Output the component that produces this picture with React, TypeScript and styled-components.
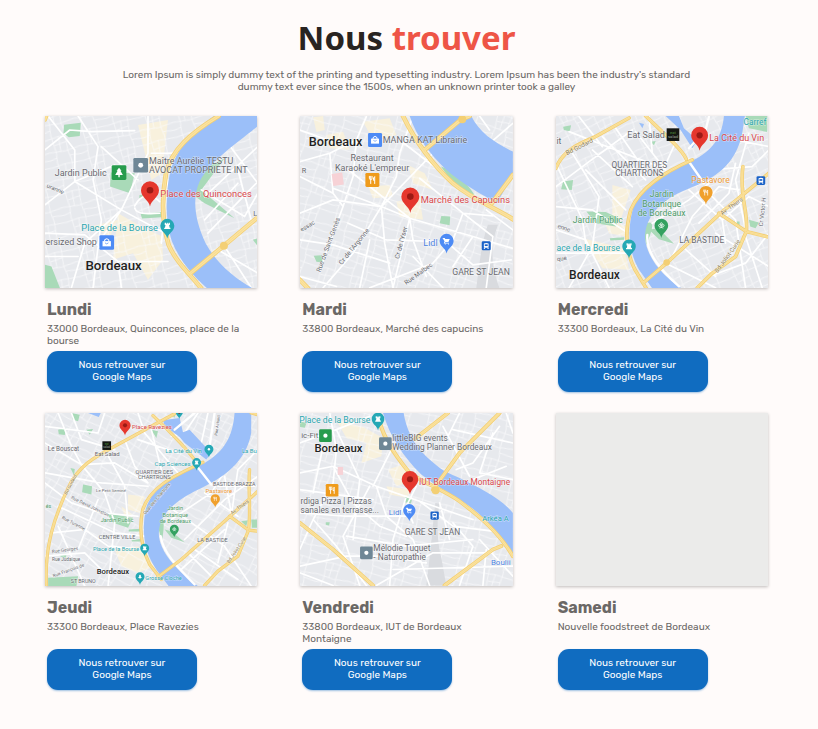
import React from 'react';
import styled, { createGlobalStyle } from 'styled-components';

const GlobalStyle = createGlobalStyle`
  *, *::before, *::after { box-sizing: border-box; }
  body {
    margin: 0;
    background: #fffbfa;
    color: #6b6866;
    font-family: Rubik, Roboto, 'Liberation Sans', sans-serif;
  }
`;

const Section = styled.section`
  padding: 16px 50px 40px 45px;
`;

const Header = styled.header`
  display: flex;
  flex-direction: column;
  align-items: center;
  gap: 9px;
  margin-bottom: 23px;
  text-align: center;
`;

const Title = styled.h2`
  margin: 0;
  color: #292421;
  font: 700 33px/44px 'Noto Sans', 'Open Sans', sans-serif;
`;

const Accent = styled.span`
  color: #ee5546;
`;

const Intro = styled.p`
  max-width: 590px;
  margin: 0;
  font-size: 10px;
  line-height: 12px;
`;

const Grid = styled.div`
  display: grid;
  grid-template-columns: repeat(3, minmax(0, 1fr));
  gap: 21px 43px;
`;

const Card = styled.article`
  display: flex;
  flex-direction: column;
`;

const MapFrame = styled.div`
  aspect-ratio: 213 / 173;
  overflow: hidden;
  background: #ebebea;
  box-shadow: 0 1px 3px rgba(0, 0, 0, 0.25);
`;

const MapSvg = styled.svg`
  display: block;
  width: 100%;
  height: 100%;
  font-family: Roboto, sans-serif;
`;

const Details = styled.div`
  display: flex;
  flex: 1;
  flex-direction: column;
  align-items: flex-start;
  padding: 12px 0 0 2px;
`;

const Day = styled.h3`
  margin: 0;
  font-size: 16px;
  font-weight: 700;
  line-height: 20px;
`;

const Address = styled.p`
  min-height: 24px;
  margin: 3px 0 4px;
  font-size: 10px;
  line-height: 12px;
`;

const MapsButton = styled.button`
  width: 150px;
  padding: 8px 24px 9px;
  border: 0;
  border-radius: 11px;
  background: #106cc0;
  box-shadow: 0 1px 2px rgba(16, 108, 192, 0.4);
  color: #fff;
  font: inherit;
  font-size: 10px;
  line-height: 12px;
  cursor: pointer;
`;

const C = {
  red: '#d8474b',
  teal: '#2aa5ae',
  green: '#4f9b69',
  blue: '#4d83e0',
  grey: '#68696f',
  orange: '#ee9a35',
  black: '#1f1f22',
};

type GlyphName = 'dot' | 'tower' | 'cart' | 'fork' | 'bag' | 'tree' | 'flower' | 'train';

function Glyph({ name, color = '#fff' }: { name: GlyphName; color?: string }) {
  switch (name) {
    case 'dot':
      return <circle r="7" fill={color} />;
    case 'tower':
      return <path fill={color} d="M-10-12h5v4h3v-4h4v4h3v-4h5v9h-3l2 10h3v5h-24v-5h3l2-10h-3z" />;
    case 'cart':
      return (
        <g fill={color}>
          <path d="M-13-11h6l2 4h17l-5 11h-12l-1 3h15v3h-20l3-8-6-10h-3z" />
          <circle cx="-5" cy="12" r="2" />
          <circle cx="7" cy="12" r="2" />
        </g>
      );
    case 'fork':
      return (
        <g stroke={color} strokeWidth="3" fill="none">
          <path d="M-9-12v7q0 4 4 4t4-4v-7M-5-12V12M7 12V-10q-5 3-4 11h4" />
        </g>
      );
    case 'bag':
      return (
        <g>
          <path fill={color} d="M-12-4h24v15h-24z" />
          <path fill="none" stroke={color} strokeWidth="3" d="M-6-3v-4q6-8 12 0v4" />
          <path fill="none" stroke="#4d8bf5" strokeWidth="2" d="M-5 1q5 6 10 0" />
        </g>
      );
    case 'tree':
      return <path fill={color} d="M0-14l7 9h-3l7 12h-9v6h-4v-6h-9l7-12h-3z" />;
    case 'flower':
      return (
        <g fill="none" stroke={color} strokeWidth="3">
          <circle cx="0" cy="-7" r="4" />
          <circle cx="-7" cy="0" r="4" />
          <circle cx="7" cy="0" r="4" />
          <path d="M0-3v13M-8 10q8-5 16 0" />
        </g>
      );
    case 'train':
      return (
        <g>
          <path fill={color} d="M-11-11q11-5 22 0v20h-22zM-9 10h5l-4 5h-5zM9 10h-5l4 5h5z" />
          <path fill="#1a62c8" d="M-7-7h14v8h-14z" />
        </g>
      );
  }
}

interface PinProps {
  x: number;
  y: number;
  color: string;
  size?: number;
  glyph?: GlyphName;
}

function Pin({ x, y, color, size = 1, glyph }: PinProps) {
  return (
    <g transform={`translate(${x} ${y})`}>
      <path
        transform={`scale(${size})`}
        fill={color}
        d="M0 49C-3 29-27 22-27 0A27 27 0 0 1 27 0C27 22 3 29 0 49Z"
      />
      {glyph ? <g transform={`scale(${size})`}><Glyph name={glyph} /></g> : <circle r={10 * size} fill="#9c1a14" />}
    </g>
  );
}

const RedPin = (p: { x: number; y: number; size?: number }) => <Pin {...p} color="#e5372d" />;

function Square({ x, y, color, glyph, w = 42 }: { x: number; y: number; color: string; glyph: GlyphName; w?: number }) {
  return (
    <g transform={`translate(${x} ${y})`}>
      <rect x={-w / 2} y={-w / 2} width={w} height={w} rx="4" fill={color} />
      <g transform={`scale(${w / 42})`}><Glyph name={glyph} /></g>
    </g>
  );
}

function EatSalad({ x, y, w = 38 }: { x: number; y: number; w?: number }) {
  return (
    <g transform={`translate(${x} ${y})`}>
      <rect x={-w / 2} y={-w / 2} width={w} height={w} fill="#141713" />
      <g fontSize={w / 3} textAnchor="middle">
        <text fill="#4c8b3a" y="-2">eat</text>
        <text fill="#9aa39a" y={w / 3 - 2}>salad</text>
      </g>
    </g>
  );
}

interface LabelProps {
  x: number;
  y: number;
  children: string;
  color?: string;
  size?: number;
  weight?: number;
  anchor?: 'start' | 'middle' | 'end';
  angle?: number;
}

function Label({ x, y, children, color = C.grey, size = 27, weight = 400, anchor = 'start', angle = 0 }: LabelProps) {
  return (
    <text
      transform={`translate(${x} ${y}) rotate(${angle})`}
      fill={color}
      fontSize={size}
      fontWeight={weight}
      textAnchor={anchor}
      stroke="#fff"
      strokeOpacity="0.5"
      strokeWidth="3"
      paintOrder="stroke"
    >
      {children}
    </text>
  );
}

interface BaseProps {
  id: string;
  label: string;
  top: number;
  mesh: number;
  river: string;
  parks?: string;
  sand?: string;
  streets: string;
  rails?: string;
  highways: string;
  bridges?: string;
  lanes?: number;
  children: React.ReactNode;
}

function CityMap({ id, label, top, mesh, river, parks, sand, streets, rails, highways, bridges, lanes = 10, children }: BaseProps) {
  return (
    <MapSvg viewBox={`20 ${top} 639 518`} preserveAspectRatio="xMidYMid slice" role="img" aria-label={label}>
      <defs>
        <pattern id={id} width="96" height="84" patternUnits="userSpaceOnUse" patternTransform={`rotate(${mesh})`}>
          <path
            d="M0 12L40 8L96 12M0 50L52 55L96 50M18 0L22 54L18 84M62 0L57 55L62 84M40 8L36 54M22 32L60 28M60 70L96 74M0 74L20 70"
            fill="none"
            stroke="#fbfbfc"
            strokeWidth="2"
          />
        </pattern>
      </defs>
      <rect x="20" y={top} width="640" height="520" fill="#e7e9ed" />
      {sand && <path d={sand} fill="#f8f1dd" />}
      <rect x="20" y={top} width="640" height="520" fill={`url(#${id})`} />
      {parks && <path d={parks} fill="#a9dab8" />}
      {rails && <path d={rails} fill="#d9dbdf" />}
      <g fill="none" strokeLinecap="round" strokeLinejoin="round">
        <path d={streets} stroke="#fff" strokeWidth="5" />
      </g>
      <path d={river} fill="#9bbff9" />
      <g fill="none" strokeLinecap="round" strokeLinejoin="round">
        {bridges && <path d={bridges} stroke="#fff" strokeWidth="7" />}
        <path d={highways} stroke="#f3cf74" strokeWidth={lanes + 1} />
        <path d={highways} stroke="#fbe3a0" strokeWidth={lanes - 4} />
        <path d={highways} stroke="#f3cf74" strokeWidth="1" />
      </g>
      {children}
    </MapSvg>
  );
}

const LundiMap = () => (
  <CityMap
    id="mesh-lundi"
    label="Plan de la place des Quinconces"
    top={18}
    mesh={-14}
    river="M528 18C470 58 412 120 396 190C380 260 384 340 402 395C424 450 462 495 508 536L645 536C590 505 535 460 503 400C470 330 462 265 485 215C515 155 590 105 660 48V18Z"
    parks="M78 44L128 38L125 78L92 82L76 70ZM218 188L290 190L276 250L216 230ZM20 465L40 470L66 536H20ZM470 215L520 165L560 145L520 200L490 240L590 325L500 280L470 258L472 325L462 290ZM304 256L330 250L330 263L304 266ZM308 312L370 306L370 322L312 326ZM645 390L660 385V410Z"
    sand="M300 45L390 30L372 190L340 210ZM240 310L300 345L372 380L375 450L330 510L285 430L225 450ZM160 350L240 330L215 380Z"
    streets="M20 120L95 60L160 65L290 62M120 18L180 110L165 210L190 330L165 534M20 285L110 215L230 165M30 18L110 120L110 215L250 300L390 375M100 534L140 400L250 300L330 130L330 20M20 370L140 375L240 455L390 455M190 110L300 210M340 130L420 130M250 300L180 400M20 440L120 440M290 288C310 250 340 250 365 275M290 295C300 318 340 310 365 310M240 455L250 534M500 260L660 110M490 240L620 320L660 250M540 60L660 220M510 370L660 215M600 180L640 330M540 420L660 490M560 410L640 534M500 330L600 220M390 210L370 400"
    highways="M542 18C460 68 400 120 384 190C372 260 372 340 392 405C416 460 456 492 490 536M458 490L555 410L660 322M20 28L24 18"
    lanes={13}
  >
    <circle cx="558" cy="408" r="12" fill="#f3cf74" />
    <Label x={24} y={232} size={18} angle={22}>uranne</Label>
    <Label x={50} y={197}>Jardin Public</Label>
    <Square x={243} y={188} color="#279c4d" glyph="tree" w={44} />
    <Square x={308} y={166} color="#6f8796" glyph="dot" w={44} />
    <Label x={333} y={161}>Maître Aurélie TESTU</Label>
    <Label x={333} y={188}>AVOCAT PROPRIETE INT</Label>
    <Label x={367} y={261} color={C.red} size={28}>Place des Quinconces</Label>
    <RedPin x={336} y={241} />
    <Label x={360} y={362} color={C.teal} size={28} anchor="end">Place de la Bourse</Label>
    <Pin x={388} y={348} color="#25a8b5" size={0.78} glyph="tower" />
    <Label x={22} y={406} size={27}>ersized Shop</Label>
    <Square x={206} y={398} color="#4d8bf5" glyph="bag" w={44} />
    <Label x={646} y={318} size={22}>L</Label>
    <Label x={142} y={482} color={C.black} size={40} weight={500}>Bordeaux</Label>
  </CityMap>
);

const MardiMap = () => (
  <CityMap
    id="mesh-mardi"
    label="Plan du marché des Capucins"
    top={18}
    mesh={16}
    river="M350 18C370 80 410 130 455 175C510 225 570 255 612 280L660 195V125C610 100 560 70 535 18Z"
    parks="M444 170C480 180 520 215 545 255L520 245C485 225 465 200 444 170ZM445 318L472 320L470 346L440 340ZM62 438L84 436L92 458L70 456Z"
    sand="M60 22L90 18L95 60L70 66ZM210 35L290 25L310 75L240 90ZM345 165L395 190L420 240L360 220ZM225 230L290 225L300 260L240 265ZM310 275L380 265L390 330L320 320ZM100 75L150 65L170 120L110 115Z"
    rails="M585 345L615 345C590 410 595 470 620 536H550C560 460 565 400 585 345Z"
    streets="M20 155L110 130L190 90L220 20M20 310L120 270L265 290L350 325L540 380L658 415M110 130L120 250L150 290L80 480M265 290L180 430L90 534M265 290L275 400L300 534M120 235L265 290L310 200L320 130L360 18M350 325L360 390L400 500M350 325L300 534M230 534L420 460L480 390L510 310L600 318M165 340L280 390L430 395M20 390L120 405L290 460M20 500L130 530M190 90L180 200L150 290M265 290L420 130L500 35M380 205L510 310L600 380L580 534M160 175L350 325M460 395L540 465L655 450M540 380L480 470M230 390L200 534M320 90L450 190M20 200L120 250M590 100L660 40M560 60L660 150M560 18L590 60M360 440L450 534M20 60L160 110M580 300L660 360"
    highways="M330 18C365 90 420 165 480 220C540 270 610 295 660 328M395 120L505 28L530 18M597 280L660 195M20 510L45 536"
    lanes={13}
  >
    <rect x="118" y="190" width="32" height="36" fill="#f7d2d6" transform="rotate(-8 134 208)" />
    <circle cx="508" cy="28" r="12" fill="#f3cf74" />
    <Label x={26} y={190} size={22}>R</Label>
    <Label x={47} y={107} color={C.black} size={38} weight={500}>Bordeaux</Label>
    <Label x={269} y={98} size={27}>MANGA KAT Librairie</Label>
    <Square x={246} y={90} color="#4d8bf5" glyph="bag" />
    <Label x={237} y={152} anchor="middle">Restaurant</Label>
    <Label x={237} y={182} anchor="middle">Karaoké L'empreur</Label>
    <Square x={238} y={210} color="#ef9b1b" glyph="fork" />
    <Label x={383} y={280} color={C.red} size={28}>Marché des Capucins</Label>
    <RedPin x={352} y={260} />
    <Label x={391} y={408} color={C.blue}>Lidl</Label>
    <Pin x={461} y={393} color="#4d8bf5" size={0.78} glyph="cart" />
    <Square x={580} y={408} color="#1a62c8" glyph="train" w={27} />
    <Label x={478} y={497} size={26}>GARE ST JEAN</Label>
    <Label x={26} y={366} size={18} angle={-32}>essac</Label>
    <Label x={82} y={488} size={20} angle={-70}>Rue de Saint-Genès</Label>
    <Label x={146} y={466} size={20} angle={-51}>Cr de l'Argonne</Label>
    <Label x={318} y={448} size={20} angle={-75}>Cr de l'Yser</Label>
    <Label x={340} y={526} size={19} angle={-36}>Rue Malbec</Label>
  </CityMap>
);

const MercrediMap = () => (
  <CityMap
    id="mesh-mercredi"
    label="Plan de la Cité du Vin"
    top={18}
    mesh={-24}
    river="M525 18C520 70 500 115 440 147C350 185 280 225 252 295C232 370 242 430 270 480L310 536H398C345 500 295 450 288 385C288 320 335 270 415 238C500 205 560 165 580 70L588 18ZM350 18L395 60L430 115L445 90L405 55L390 18Z"
    parks="M42 50L66 46L62 64L44 60ZM42 215L72 210L68 240L36 238ZM112 305L170 306L210 325L200 350L140 340ZM300 360L328 355L375 402L330 388ZM292 340C320 330 310 360 292 405L285 375ZM590 18H655V66L600 55ZM600 330L630 338L620 355L604 350ZM305 95L320 93L315 106ZM182 385L225 382L225 390L184 392ZM555 335H572V348L556 345Z"
    sand="M190 225L245 240L215 330L190 320ZM100 385L225 415L240 480L160 475ZM160 320L230 350L230 380L180 370Z"
    streets="M20 230L120 155L250 60M70 130L150 260L130 410M20 360L110 390L180 534M20 290L130 300L230 365M130 410L60 534M160 80L290 210M200 55L300 200M110 180L230 300M20 430L240 430M260 65L350 180M60 65L200 120L330 170M90 20L160 110M20 160L100 330L110 400M300 20L310 130M385 85L340 185M130 120L250 230M480 250L560 330L590 534M420 240L520 330L530 400M310 340L420 270L480 220L490 170M370 440L430 320L510 230M450 340L540 250L560 160M520 330L600 260L660 290M510 230L570 240M350 460L500 534M500 370L660 470M400 410L500 500M590 380L640 534M660 120L610 170L480 180M600 70L560 210L590 360M660 370L590 460L480 500M560 90L660 110"
    bridges="M415 148L465 220M295 375C290 430 335 480 390 530M420 115L470 60L480 20"
    highways="M20 175C40 125 80 105 135 82L240 24M290 18C350 75 400 120 412 148M430 150C350 185 275 230 245 300C225 370 232 430 258 480L292 536M282 520L355 458L520 305L660 190M582 170C570 260 600 310 592 365L510 310M592 365L560 440L490 490L445 534M592 365L660 382"
  >
    <path d="M270 38L285 42L280 55Z" fill="#9bbff9" />
    <circle cx="353" cy="458" r="10" fill="#f3cf74" />
    <Label x={22} y={102} size={26}>it</Label>
    <Label x={54} y={136} size={19} angle={-27} color="#8b7c58">Bd Godard</Label>
    <Label x={235} y={83}>Eat Salad</Label>
    <EatSalad x={372} y={74} />
    <Label x={481} y={94} color={C.red}>La Cité du Vin</Label>
    <RedPin x={452} y={76} size={0.94} />
    <Label x={584} y={45} color={C.teal} size={25}>Carref</Label>
    <Label x={271} y={175} anchor="middle" size={25}>QUARTIER DES</Label>
    <Label x={271} y={198} anchor="middle" size={25}>CHARTRONS</Label>
    <Label x={427} y={218} color={C.orange} size={26}>Pastavore</Label>
    <Pin x={471} y={248} color="#f0a02c" size={0.74} glyph="fork" />
    <Square x={636} y={212} color="#1a62c8" glyph="train" w={26} />
    <Label x={338} y={261} anchor="middle" color={C.green} size={26}>Jardin</Label>
    <Label x={338} y={290} anchor="middle" color={C.green} size={26}>Botanique</Label>
    <Label x={338} y={318} anchor="middle" color={C.green} size={26}>de Bordeaux</Label>
    <Pin x={337} y={347} color="#34a160" size={0.76} glyph="flower" />
    <Label x={71} y={339} color={C.green} size={26}>Jardin Public</Label>
    <Label x={22} y={424} color={C.teal} size={26}>ace de la Bourse</Label>
    <Pin x={240} y={409} color="#25a8b5" size={0.75} glyph="tower" />
    <Label x={391} y={400} size={25}>LA BASTIDE</Label>
    <Label x={520} y={317} size={18} angle={-36} color="#8b7c58">Av. Thiers</Label>
    <Label x={506} y={490} size={18} angle={-54} color="#8b7c58">Bd Joliot-Curie</Label>
    <Label x={642} y={350} size={18} angle={-84}>Cr Victor H</Label>
    <Label x={24} y={354} size={18} angle={18}>enne</Label>
    <Label x={24} y={454} size={18} angle={-8}>que</Label>
    <Label x={60} y={508} color={C.black} size={36} weight={500}>Bordeaux</Label>
  </CityMap>
);

const JeudiMap = () => (
  <CityMap
    id="mesh-jeudi"
    label="Plan de la place Ravezies"
    top={20}
    mesh={28}
    river="M590 20C585 90 560 135 500 170C420 205 345 235 323 310C310 380 320 440 355 490L392 540H480C430 500 370 450 363 390C358 330 405 290 470 255C560 215 625 165 640 80V20ZM375 42L425 35L435 78L455 70L520 140L505 160L440 110L425 92L380 58ZM150 20L188 20L182 32Z"
    parks="M60 70L85 65L80 86L62 84ZM100 20L125 25L120 45L104 40ZM145 70L165 68L155 85ZM135 235L162 240L160 265L132 258ZM205 320L285 335L270 365L225 350ZM30 515L120 510L115 540H30ZM380 370L400 375L440 408L400 395ZM97 185L110 188L108 208ZM340 70L360 75L355 95ZM365 330C385 340 375 380 372 405L362 370ZM610 345L630 342L625 360ZM640 340H660V365H642ZM272 370L310 368V376H272ZM280 402L312 398V406H282ZM62 448L85 446L82 458ZM400 25L412 22L410 34Z"
    sand="M270 265L320 270L305 320L270 310ZM230 430L300 420L350 480L300 500L250 480ZM250 300L290 330L260 330Z"
    streets="M20 110L130 175L230 170L330 230M60 20L100 120L130 175M20 230L100 290L190 320L300 330M130 175L200 260L230 350L210 540M60 300L230 380L320 390M40 380L140 370L210 420L320 430M20 200L190 230L330 240M20 450L140 440L200 500M260 100L290 180L330 230M200 130L260 240L270 350M340 70L370 190M300 20L320 80L420 200M100 20L130 100L230 130M200 20L180 80L20 60M60 360L140 540M180 280L120 430M300 100L420 140M480 20L440 80L400 90M510 20L490 110M390 300L560 420L640 540M440 400L560 280L660 210M400 340L520 260L570 180M560 210L580 320M430 490L560 370M470 430L600 520M500 260L600 330M650 240L540 240M570 350L540 470M660 130L600 190L580 330M450 440L520 510"
    bridges="M477 180L520 235M368 390C375 440 420 485 470 535M410 70L470 20M530 20L515 120"
    highways="M25 538C18 420 50 330 90 245C120 180 165 155 230 120L340 60L410 22M345 28C400 80 450 130 478 172M495 168C420 205 340 235 314 310C300 380 312 430 335 475L370 520M360 512L430 460L560 345L660 255M635 190C630 250 640 310 632 372L575 330M632 372L600 450L540 495L500 538M632 372L660 375M640 20L660 25"
    lanes={9}
  >
    <Label x={282} y={68} color={C.red} size={18}>Place Ravezies</Label>
    <RedPin x={261} y={57} size={0.62} />
    <Pin x={424} y={18} color="#25a8b5" size={0.4} />
    <Label x={29} y={134} size={19}>Le Bouscat</Label>
    <EatSalad x={206} y={118} w={26} />
    <Label x={170} y={149} size={18}>Eat Salad</Label>
    <Label x={492} y={139} color={C.teal} size={18} anchor="end">La Cité du Vin</Label>
    <Pin x={513} y={129} color="#25a8b5" size={0.5} glyph="dot" />
    <Label x={458} y={178} color={C.teal} size={18} anchor="end">Cap Sciences</Label>
    <Pin x={476} y={169} color="#25a8b5" size={0.5} glyph="tower" />
    <Label x={612} y={141} color={C.teal} size={18}>La Bu</Label>
    <Label x={349} y={203} anchor="middle" size={17}>QUARTIER DES</Label>
    <Label x={349} y={217} anchor="middle" size={17}>CHARTRONS</Label>
    <Label x={525} y={239} size={16}>BASTIDE-BRAZZA</Label>
    <Label x={503} y={259} color={C.orange} size={18}>Pastavore</Label>
    <Pin x={532} y={278} color="#f0a02c" size={0.52} glyph="fork" />
    <Label x={412} y={312} anchor="middle" color={C.green} size={17}>Jardin</Label>
    <Label x={412} y={331} anchor="middle" color={C.green} size={17}>Botanique</Label>
    <Label x={412} y={349} anchor="middle" color={C.green} size={17}>de Bordeaux</Label>
    <Pin x={409} y={369} color="#34a160" size={0.5} glyph="flower" />
    <Label x={188} y={347} color={C.green} size={17}>Jardin Public</Label>
    <Label x={182} y={399} size={17}>CENTRE VILLE</Label>
    <Label x={478} y={406} size={17}>LA BASTIDE</Label>
    <Label x={304} y={435} color={C.teal} size={17} anchor="end">Place de la Bourse</Label>
    <Pin x={320} y={426} color="#25a8b5" size={0.5} glyph="tower" />
    <Label x={176} y={503} color={C.black} size={23} weight={500}>Bordeaux</Label>
    <Label x={322} y={522} color={C.teal} size={17}>Grosse Cloche</Label>
    <Pin x={306} y={512} color="#25a8b5" size={0.5} glyph="tree" />
    <Label x={98} y={532} size={16}>ST BRUNO</Label>
    <Label x={174} y={258} size={13}>Le Petit Seminé</Label>
    <Label x={98} y={277} size={14} angle={26}>Rue David Johnston</Label>
    <Label x={70} y={337} size={14} angle={28}>Rue Turenne</Label>
    <Label x={42} y={441} size={14} angle={-7}>Rue Georges</Label>
    <Label x={42} y={464} size={14}>Rue Judaïque</Label>
    <Label x={46} y={514} size={14} angle={-20}>Rue François de</Label>
    <Label x={86} y={266} size={14} angle={-62} color="#8b7c58">Bd Godard</Label>
    <Label x={322} y={326} size={14} angle={-50} color="#8b7c58">Quai des Chartrons</Label>
    <Label x={582} y={326} size={15} angle={-36} color="#8b7c58">Av. Thiers</Label>
    <Label x={574} y={472} size={14} angle={-56} color="#8b7c58">Bd Joliot-Curie</Label>
    <Label x={538} y={88} size={12} angle={-82}>Rue Achard</Label>
    <Label x={23} y={304} color={C.green} size={16}>és</Label>
  </CityMap>
);

const VendrediMap = () => (
  <CityMap
    id="mesh-vendredi"
    label="Plan de l'IUT Bordeaux Montaigne"
    top={20}
    mesh={14}
    river="M270 20C290 90 330 150 385 205C440 250 520 285 560 325C600 360 640 410 660 455V320C615 265 520 225 455 195C390 150 345 100 332 20Z"
    parks="M338 272L358 276L354 292L336 288ZM98 348L110 348L108 358L98 356ZM20 45L40 50L35 64L20 62ZM465 205L520 235L500 230Z"
    sand="M130 42L210 62L270 95L265 150L205 170L220 110L160 95ZM285 190L330 175L370 220L310 240ZM280 240L350 250L345 275L290 265Z"
    rails="M427 290L440 292C432 340 430 400 446 460L460 538H400C408 480 416 390 427 290Z"
    streets="M20 110L130 70L230 30M20 200L120 180L250 240L380 285L540 340M110 20L130 130L120 230L60 340L20 430M120 180L180 290L260 360L340 390M230 240L150 390L200 538M250 240L280 330L360 400L410 538M20 320L160 330L340 330M130 70L200 220L180 400M60 340L130 420L220 538M340 270L300 400L290 538M20 250L240 280M160 390L340 420L540 400M300 120L240 240M20 480L160 450L280 450L400 470M250 538L420 440L600 440M480 350L540 420L500 538M380 285L480 360L640 380M560 400L660 510M20 500L120 538M440 290L470 400M370 240L340 300L360 350M90 120L60 260M620 60L540 170L490 190M450 60L530 210M500 20L460 100M660 110L480 70M660 220L560 200L600 80M640 20L660 80M540 220L640 180M580 430L570 538M300 490L660 480"
    highways="M256 20C260 80 300 140 350 200C400 235 450 250 500 285C560 330 620 380 660 450M365 98L465 20M420 250L500 140L620 20M20 350L120 430L240 538M455 538L600 430L625 420"
    lanes={11}
  >
    <rect x="134" y="182" width="16" height="24" fill="#f7d2d6" />
    <circle cx="428" cy="252" r="12" fill="#f3cf74" />
    <Label x={232} y={50} color={C.teal} size={26} anchor="end">Place de la Bourse</Label>
    <Pin x={255} y={38} color="#25a8b5" size={0.7} glyph="tower" />
    <Label x={24} y={95} size={24}>ic-Fit</Label>
    <Square x={97} y={88} color="#279c4d" glyph="dot" w={38} />
    <Label x={64} y={138} color={C.black} size={34} weight={500}>Bordeaux</Label>
    <Square x={277} y={112} color="#6f8796" glyph="dot" w={38} />
    <Label x={298} y={105} size={25}>littleBIG events</Label>
    <Label x={298} y={132} size={25}>Wedding Planner Bordeaux</Label>
    <Label x={378} y={236} color={C.red} size={25}>IUT Bordeaux Montaigne</Label>
    <RedPin x={351} y={219} size={0.92} />
    <Square x={117} y={252} color="#ef9b1b" glyph="fork" w={38} />
    <Label x={22} y={293} size={25}>rdiga Pizza | Pizzas</Label>
    <Label x={22} y={320} size={25}>sanales en terrasse...</Label>
    <Label x={287} y={326} color={C.blue} size={24}>Lidl</Label>
    <Pin x={349} y={312} color="#4d8bf5" size={0.68} glyph="cart" />
    <Square x={425} y={328} color="#1a62c8" glyph="train" w={25} />
    <Label x={335} y={387} size={25}>GARE ST JEAN</Label>
    <Label x={568} y={344} color={C.teal} size={23}>Arkéa A</Label>
    <Square x={220} y={440} color="#6f8796" glyph="dot" w={38} />
    <Label x={241} y={434} size={25}>Mélodie Tuquet</Label>
    <Label x={241} y={461} size={25}>- Naturopathie</Label>
    <Label x={594} y={478} color={C.blue} size={24}>Boulii</Label>
  </CityMap>
);

interface Stop {
  day: string;
  address: string;
  Map?: React.ComponentType;
}

const stops: Stop[] = [
  { day: 'Lundi', address: '33000 Bordeaux, Quinconces, place de la bourse', Map: LundiMap },
  { day: 'Mardi', address: '33800 Bordeaux, Marché des capucins', Map: MardiMap },
  { day: 'Mercredi', address: '33300 Bordeaux, La Cité du Vin', Map: MercrediMap },
  { day: 'Jeudi', address: '33300 Bordeaux, Place Ravezies', Map: JeudiMap },
  { day: 'Vendredi', address: '33800 Bordeaux, IUT de Bordeaux Montaigne', Map: VendrediMap },
  { day: 'Samedi', address: 'Nouvelle foodstreet de Bordeaux' },
];

export default function App() {
  return (
    <>
      <GlobalStyle />
      <Section>
        <Header>
          <Title>
            Nous <Accent>trouver</Accent>
          </Title>
          <Intro>
            Lorem Ipsum is simply dummy text of the printing and typesetting industry. Lorem Ipsum has been the
            industry's standard dummy text ever since the 1500s, when an unknown printer took a galley
          </Intro>
        </Header>
        <Grid>
          {stops.map(({ day, address, Map }) => (
            <Card key={day}>
              <MapFrame>{Map && <Map />}</MapFrame>
              <Details>
                <Day>{day}</Day>
                <Address>{address}</Address>
                <MapsButton type="button">Nous retrouver sur Google Maps</MapsButton>
              </Details>
            </Card>
          ))}
        </Grid>
      </Section>
    </>
  );
}
